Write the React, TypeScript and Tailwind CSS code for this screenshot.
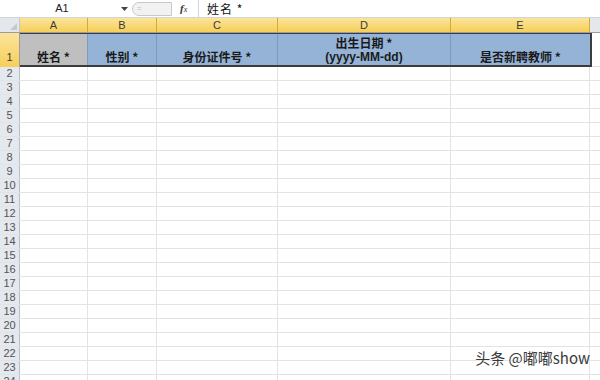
import React from 'react';

const cols = [
  { key: 'A', w: 'w-[68px]', label: ['姓名 *'], bg: 'bg-[#bfbfbf]' },
  { key: 'B', w: 'w-[69px]', label: ['性别 *'], bg: 'bg-[#95b3d7]' },
  { key: 'C', w: 'w-[121px]', label: ['身份证件号 *'], bg: 'bg-[#95b3d7]' },
  { key: 'D', w: 'w-[173px]', label: ['出生日期 *', '(yyyy-MM-dd)'], bg: 'bg-[#95b3d7]' },
  { key: 'E', w: 'w-[139px]', label: ['是否新聘教师 *'], bg: 'bg-[#95b3d7]' },
];

const rows = Array.from({ length: 23 }, (_, i) => i + 2);

export default function App() {
  return (
    <div
      className="relative h-[380px] w-[600px] overflow-hidden bg-white text-[#222]"
      style={{ fontFamily: '"Liberation Sans", "Noto Sans CJK SC", sans-serif' }}
    >
      {/* Formula bar */}
      <div className="flex h-[18px] items-center border-b border-[#d4d4d4] bg-white text-[12px]">
        <div className="flex w-[118px] justify-center pl-[6px] text-[11px] text-[#222]">A1</div>
        <div className="flex w-[12px] justify-center">
          <svg width="7" height="4" viewBox="0 0 7 4">
            <path d="M0 0h7L3.5 4z" fill="#444" />
          </svg>
        </div>
        <div className="ml-[2px] flex h-[14px] w-[40px] items-center rounded-l-full border border-[#c9c9c9] bg-[#f2f2f2] pl-[4px]">
          <span className="text-[8px] leading-none text-[#bbb]">=</span>
        </div>
        <div className="ml-[8px] w-[18px] text-[11px] italic text-[#333]" style={{ fontFamily: '"Liberation Serif", serif' }}>
          <span className="font-bold">f</span>
          <span className="text-[8px]">x</span>
        </div>
        <div className="h-[18px] border-l border-[#d4d4d4]" />
        <div className="pl-[8px] text-[12px] tracking-[1px] text-[#111]" style={{ fontFamily: '"Noto Sans CJK SC", sans-serif' }}>
          姓名 *
        </div>
      </div>

      {/* Column letters */}
      <div className="flex h-[15px] border-b border-[#9c9c9c] text-[11px]">
        <div className="relative w-[20px] border-r border-[#c5c5c5] bg-[#e4e7ec]">
          <svg className="absolute bottom-[2px] right-[2px]" width="7" height="7" viewBox="0 0 7 7">
            <path d="M7 0v7H0z" fill="#c4c8cf" />
          </svg>
        </div>
        {cols.map((c) => (
          <div
            key={c.key}
            className={`${c.w} flex items-center justify-center border-r border-[#d1ab3e] bg-gradient-to-b from-[#fbe49a] to-[#f6cf57] text-[#3b3b3b]`}
          >
            {c.key}
          </div>
        ))}
        <div className="flex-1 bg-[#e4e7ec]" />
      </div>

      {/* Row 1 */}
      <div className="flex h-[34px]">
        <div className="flex w-[20px] items-end justify-center border-r border-[#9c9c9c] bg-gradient-to-b from-[#fbe49a] to-[#f6cf57] pb-[2px] text-[11px] text-[#3b3b3b]">
          1
        </div>
        <div className="flex border-b-2 border-r-2 border-t border-[#3c3c3c]">
          {cols.map((c, i) => (
            <div
              key={c.key}
              className={`${c.w} ${c.bg} ${i === 4 ? 'w-[137px]' : 'border-r border-[#7f9cc0]'} flex flex-col items-center justify-end pb-[1px] text-[12px] font-bold leading-[14px] text-[#1a1a1a]`}
              style={{ fontFamily: '"Noto Sans CJK SC", sans-serif' }}
            >
              {c.label.map((l) => (
                <span key={l} style={l.startsWith('(') ? { fontFamily: '"Liberation Sans", sans-serif' } : undefined}>
                  {l}
                </span>
              ))}
            </div>
          ))}
        </div>
        <div className="flex-1 border-b border-[#e0e0e0]" />
      </div>

      {/* Remaining rows */}
      {rows.map((r) => (
        <div key={r} className="flex h-[14px] border-b border-[#e3e3e3]">
          <div className="flex w-[20px] items-center justify-center border-r border-[#b9bec7] bg-[#e4e8ef] text-[11px] text-[#555]">
            {r}
          </div>
          {cols.map((c) => (
            <div key={c.key} className={`${c.w} border-r border-[#e3e3e3]`} />
          ))}
          <div className="flex-1" />
        </div>
      ))}

      {/* watermark */}
      <div
        className="absolute bottom-[11px] right-[10px] text-[15px] text-[#3a3a3a]"
        style={{ fontFamily: '"Noto Sans CJK SC", sans-serif', textShadow: '0 0 2px #fff, 0 0 2px #fff' }}
      >
        头条 @嘟嘟show
      </div>
    </div>
  );
}
